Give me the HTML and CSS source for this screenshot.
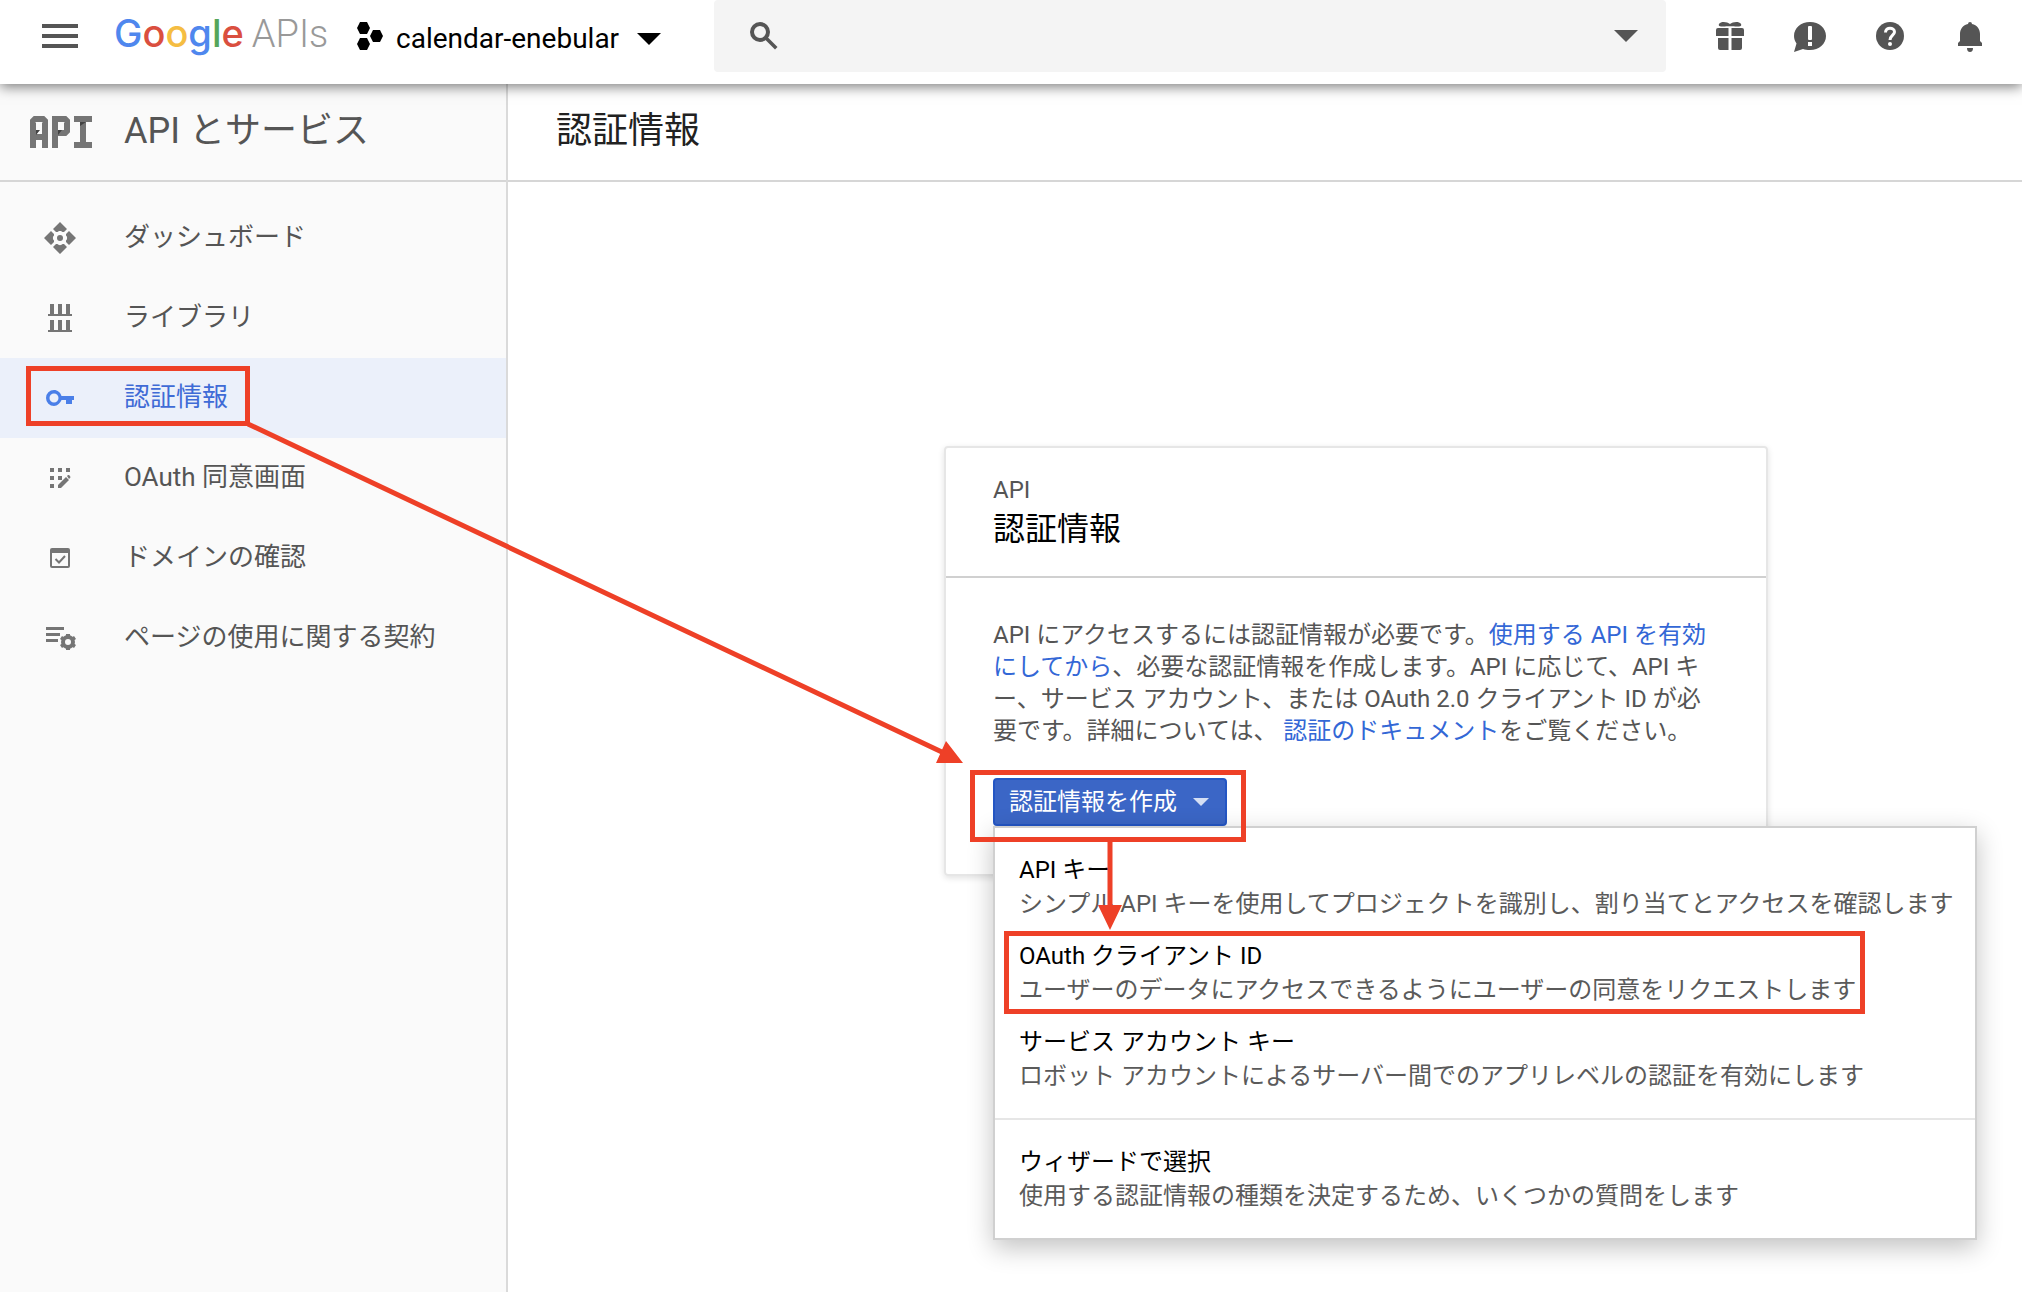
FILE: index.html
```html
<!DOCTYPE html>
<html lang="ja">
<head>
<meta charset="utf-8">
<meta name="viewport" content="width=device-width, initial-scale=1">
<title>認証情報 - API とサービス</title>
<link rel="stylesheet" href="styles.css">
</head>
<body>
<header class="topbar">
  <div class="topbar-start">
    <button class="icon-button" type="button" aria-label="メニュー">
      <svg width="36" height="36" viewBox="0 0 36 36"><path d="M0 6h36v4H0zM0 16h36v4H0zM0 26h36v4H0z"/></svg>
    </button>
    <a class="logo" href="#"><span class="logo-google"><span class="g-blue">G</span><span class="g-red">o</span><span class="g-yellow">o</span><span class="g-blue">g</span><span class="g-green">l</span><span class="g-red">e</span></span><span class="logo-apis">APIs</span></a>
    <button class="project" type="button">
      <svg width="26" height="28" viewBox="0 0 26 28"><path d="M3 0h7l3 6-3 6H3L0 6zM16 8h7l3 6-3 6h-7l-3-6zM3 16h7l3 6-3 6H3l-3-6z"/></svg>
      <span class="project-name">calendar-enebular</span>
      <svg class="project-arrow" width="24" height="12" viewBox="0 0 24 12"><path d="M0 0h24L12 12z"/></svg>
    </button>
  </div>
  <form class="search">
    <svg width="28" height="28" viewBox="0 0 28 28"><circle class="line" cx="10" cy="10" r="8" stroke-width="4"/><path d="M15 17.500l2.500-2.500L27.500 25 25 27.500z"/></svg>
    <input class="search-input" type="search" aria-label="検索">
    <button class="icon-button" type="button" aria-label="検索オプション">
      <svg width="24" height="12" viewBox="0 0 24 12"><path d="M0 0h24L12 12z"/></svg>
    </button>
  </form>
  <div class="topbar-end">
    <button class="icon-button" type="button" aria-label="無料トライアル">
      <svg width="36" height="36" viewBox="0 0 36 36"><path d="M6 10h10.500v8H4v-6q0-2 2-2zM19.500 10H30q2 0 2 2v6H19.500zM6 20h10.500v12H8q-2 0-2-2zM19.500 20H30v10q0 2-2 2h-8.500zM18 6c2-1.500 6-2.500 9-1.500 3 1 3 4 0 4-3 .300-5-.500-6.500-.300-1.500.200-3.500.200-5 0C14 8 12 8.800 9 8.500c-3 0-3-3 0-4 3-1 7 0 9 1.500z"/></svg>
    </button>
    <button class="icon-button" type="button" aria-label="フィードバック">
      <svg width="36" height="36" viewBox="0 0 36 36"><path fill-rule="evenodd" d="M18 4c9 0 16 6 16 14s-7 14-16 14c-3 0-5-.300-7-1L2 34l2.500-8.500C3 23 2 21 2 18 2 10 9 4 18 4zM16 9v12q0 1 1 1h2q1 0 1-1V9q0-1-1-1h-2q-1 0-1 1zM16 24v4h4v-4z"/></svg>
    </button>
    <button class="icon-button" type="button" aria-label="ヘルプ">
      <svg width="36" height="36" viewBox="0 0 36 36"><circle cx="18" cy="18" r="14"/><path d="M13.500 14.500c0-6 9-5.500 9-.500 0 3-4.500 3.500-4.500 8" fill="none" stroke="#fff" stroke-width="3"/><circle cx="18" cy="26" r="2" fill="#fff"/></svg>
    </button>
    <button class="icon-button" type="button" aria-label="通知">
      <svg width="36" height="36" viewBox="0 0 36 36"><path d="M18 4q2 0 2 2c5 1 8 5 8 10v7l2 2v3H6v-3l2-2v-7c0-5 3-9 8-10q0-2 2-2zM15 30h6q0 4-3 4t-3-4z"/></svg>
    </button>
  </div>
</header>

<div class="layout">
  <aside class="sidebar">
    <div class="sidebar-title">
      <svg class="product-icon" width="62" height="32" viewBox="0 0 62 32"><path class="line" stroke-width="6" d="M3 32V5l2-2h8l2 2v27M3 21h12M25 32V3h10l2 2v10l-2 2H25M44 3h18M53 3v26M44 29h18"/><path class="fold" d="M6 14h4l-4 5zM28 14h4l-4 5zM50 6h6l-6 4z"/></svg>
      <h2 class="heading">API とサービス</h2>
    </div>
    <nav class="nav">
      <a class="nav-item" href="#">
        <svg width="36" height="36" viewBox="0 0 36 36"><path d="M18 2l7 7-3 3h-1.500c-1-1.500-4-1.500-5 0H14l-3-3zM18 34l7-7-3-3h-1.500c-1 1.500-4 1.500-5 0H14l-3 3zM2 18l7-7 3 3v1.500c-1.500 1-1.500 4 0 5V22l-3 3zM34 18l-7-7-3 3v1.500c1.500 1 1.500 4 0 5V22l3 3z"/><circle cx="18" cy="18" r="3"/></svg>
        ダッシュボード
      </a>
      <a class="nav-item" href="#">
        <svg width="36" height="36" viewBox="0 0 36 36"><path d="M8 4h4v10h4V4h4v10h4V4h4v10h2v2H6v-2h2zM8 20h4v10h4V20h4v10h4V20h4v10h2v2H6v-2h2z"/></svg>
        ライブラリ
      </a>
      <a class="nav-item nav-item-active" href="#" aria-current="page">
        <svg width="36" height="36" viewBox="0 0 36 36"><path fill-rule="evenodd" d="M12 10c3.500 0 6.500 2.500 7.500 6H32v4h-2v4h-6v-4h-4.500c-1 2.500-4 6-7.500 6a8 8 0 0 1 0-16zM12 13.500a4.500 4.500 0 1 0 0 9 4.500 4.500 0 0 0 0-9z"/></svg>
        認証情報
      </a>
      <a class="nav-item" href="#">
        <svg width="36" height="36" viewBox="0 0 36 36"><path d="M8 8h4v4H8zM16 8h4v4h-4zM24 8h4v4h-4zM8 16h4v4H8zM16 16h4v4h-4zM8 24h4v4H8zM16 25l8-8 3 3-8 8h-3zM25 16l1-1q1-.500 2 1t0 2l-1 1z"/></svg>
        OAuth 同意画面
      </a>
      <a class="nav-item" href="#">
        <svg width="36" height="36" viewBox="0 0 36 36"><path fill-rule="evenodd" d="M10 8h16q2 0 2 2v16q0 2-2 2H10q-2 0-2-2V10q0-2 2-2zM10 13v13h16V13z"/><path class="line" d="M13.500 19l3.500 3.500 6-6.500" stroke-width="2"/></svg>
        ドメインの確認
      </a>
      <a class="nav-item" href="#">
        <svg width="36" height="36" viewBox="0 0 36 36"><path d="M4 7h18v3H4zM4 13h14v3H4zM4 19h12v3H4z"/><circle class="line" cx="26" cy="22" r="5" stroke-width="4"/><path d="M24 14h4v3h-4zM24 27h4v3h-4zM18 19l2-3 3 2-2 3zM34 19l-2-3-3 2 2 3zM18 25l2 3 3-2-2-3zM34 25l-2 3-3-2 2-3z"/></svg>
        ページの使用に関する契約
      </a>
    </nav>
  </aside>

  <main class="main">
    <div class="page-title"><h1 class="heading">認証情報</h1></div>
    <div class="content">
      <section class="card">
        <div class="card-head">
          <p class="card-kicker">API</p>
          <h2 class="card-title">認証情報</h2>
        </div>
        <div class="card-body">
          <p class="card-text">API にアクセスするには認証情報が必要です。<a href="#">使用する API を有効<br>にしてから</a>、必要な認証情報を作成します。API に応じて、API キ<br>ー、サービス アカウント、または OAuth 2.0 クライアント ID が必<br>要です。詳細については、 <a href="#">認証のドキュメント</a>をご覧ください。</p>
          <div class="dropdown">
            <button class="create-button" type="button" aria-haspopup="true" aria-expanded="true">
              認証情報を作成
              <svg width="16" height="8" viewBox="0 0 16 8"><path d="M0 0h16L8 8z"/></svg>
            </button>
            <div class="menu">
              <div class="menu-group">
                <a class="menu-item" href="#"><span class="menu-title">API キー</span><span>シンプル API キーを使用してプロジェクトを識別し、割り当てとアクセスを確認します</span></a>
                <a class="menu-item" href="#"><span class="menu-title">OAuth クライアント ID</span><span>ユーザーのデータにアクセスできるようにユーザーの同意をリクエストします</span></a>
                <a class="menu-item" href="#"><span class="menu-title">サービス アカウント キー</span><span>ロボット アカウントによるサーバー間でのアプリレベルの認証を有効にします</span></a>
              </div>
              <div class="menu-group">
                <a class="menu-item" href="#"><span class="menu-title">ウィザードで選択</span><span>使用する認証情報の種類を決定するため、いくつかの質問をします</span></a>
              </div>
            </div>
          </div>
        </div>
      </section>
    </div>
  </main>
</div>

<svg class="annotations" width="1900" height="1040" viewBox="0 0 1900 1040" aria-hidden="true">
  <g fill="none" stroke="#ee4027" stroke-width="5">
    <rect x="28.500" y="368.500" width="219" height="55"/>
    <rect x="972.500" y="772.500" width="271" height="67"/>
    <rect x="1006.500" y="933.500" width="856" height="78"/>
    <path d="M248 424L944 753M1110 842v66"/>
  </g>
  <path fill="#ee4027" d="M963 763l-17-22-10 22zM1110 930l-12-25h24z"/>
</svg>
</body>
</html>
```

FILE: styles.css
```css
* {
  box-sizing: border-box;
}

body {
  margin: 0;
  min-height: 100vh;
  display: flex;
  flex-direction: column;
  position: relative;
  background: #fff;
  color: #555;
  font-family: Roboto, "Noto Sans CJK JP", sans-serif;
  font-size: 24px;
  line-height: 32px;
}

h1, h2, p {
  margin: 0;
  font-weight: 400;
}

a {
  color: #3367d6;
  text-decoration: none;
}

button {
  border: 0;
  padding: 0;
  background: none;
  font: inherit;
  color: inherit;
  cursor: pointer;
}

svg {
  display: block;
  flex: none;
  fill: currentColor;
}

.line {
  fill: none;
  stroke: currentColor;
}

/* Top bar */
.topbar {
  position: relative;
  z-index: 1;
  display: flex;
  padding-bottom: 12px;
  background: #fff;
  box-shadow: 0 3px 12px rgba(0, 0, 0, 0.5);
}

.topbar-start {
  display: flex;
  align-items: center;
  width: 714px;
  height: 72px;
  padding-left: 42px;
}

.icon-button {
  display: flex;
}

.logo {
  display: flex;
  align-items: baseline;
  gap: 8px;
  width: 242px;
  padding: 0 0 6px 36px;
  line-height: 64px;
}

.logo-google {
  font-family: Inter, sans-serif;
  font-size: 38px;
  font-weight: 500;
}

.logo-apis {
  font-size: 38px;
  font-weight: 300;
  color: #999;
}

.g-blue { color: #4f87ee; }
.g-red { color: #da4f3f; }
.g-yellow { color: #f5bd42; }
.g-green { color: #55a55b; }

.project {
  display: flex;
  align-items: center;
  margin-left: 37px;
  color: #000;
}

.project-name {
  margin: 6px 18px 0 13px;
  font-size: 28px;
}

.project-arrow {
  margin-top: 6px;
}

.search {
  flex: 1;
  display: flex;
  align-items: center;
  height: 72px;
  padding: 0 28px 0 36px;
  background: #f4f4f4;
  border-radius: 4px;
}

.search-input {
  flex: 1;
  min-width: 0;
  height: 48px;
  margin: 0 16px;
  border: 0;
  outline: 0;
  background: none;
  font: inherit;
}

.topbar-end {
  display: flex;
  align-items: center;
  gap: 44px;
  height: 72px;
  padding: 0 34px 0 46px;
}

/* Page frame */
.layout {
  flex: 1;
  display: flex;
}

.sidebar {
  width: 508px;
  background: #fafafa;
  border-right: 2px solid #dadada;
}

.sidebar-title,
.page-title {
  display: flex;
  align-items: center;
  height: 98px;
  border-bottom: 2px solid #d6d6d6;
}

.sidebar-title {
  gap: 32px;
  padding-left: 30px;
}

.product-icon {
  color: #757575;
}

.fold {
  fill: #424242;
}

.page-title {
  padding-left: 48px;
  color: #212121;
}

.heading {
  font-size: 36px;
  line-height: 48px;
  padding-bottom: 2px;
}

.nav {
  padding-top: 16px;
}

.nav-item {
  display: flex;
  align-items: center;
  gap: 46px;
  height: 80px;
  padding: 0 0 2px 42px;
  font-size: 26px;
  color: #555;
}

.nav-item svg {
  margin-top: 2px;
  color: #757575;
}

.nav-item-active {
  background: #ebf0fa;
  color: #3f6bd6;
}

.nav-item-active svg {
  color: #4a7fe8;
}

.main {
  flex: 1;
  min-width: 0;
}

.content {
  display: flex;
  justify-content: center;
  padding: 264px 0 64px 182px;
}

/* Credentials card */
.card {
  width: 824px;
  border: 2px solid #e6e6e6;
  border-radius: 4px;
  box-shadow: 0 2px 6px rgba(0, 0, 0, 0.12);
}

.card-head {
  padding: 26px 47px 24px;
  border-bottom: 2px solid #d0d0d0;
}

.card-title {
  font-size: 32px;
  line-height: 46px;
  color: #000;
}

.card-body {
  padding: 41px 47px 48px;
}

.card-text {
  white-space: nowrap;
}

.dropdown {
  position: relative;
  display: flex;
  margin-top: 31px;
}

.create-button {
  display: flex;
  align-items: center;
  gap: 16px;
  height: 48px;
  padding: 0 16px 0 14px;
  border: 2px solid #2456c4;
  border-radius: 4px;
  background: #3b66c6;
  color: #fff;
}

.create-button svg {
  color: #d5dff4;
}

.menu {
  position: absolute;
  top: 100%;
  left: 0;
  width: 984px;
  border: 2px solid #d0d0d0;
  background: #fff;
  box-shadow: 0 8px 24px rgba(0, 0, 0, 0.24);
  white-space: nowrap;
}

.menu-group {
  padding: 16px 0;
}

.menu-group + .menu-group {
  border-top: 2px solid #e6e6e6;
}

.menu-item {
  display: flex;
  flex-direction: column;
  padding: 9px 24px;
  line-height: 34px;
  color: #5a5a5a;
}

.menu-title {
  color: #000;
}

/* Red callouts drawn over the page */
.annotations {
  position: absolute;
  top: 0;
  left: 0;
  z-index: 2;
  pointer-events: none;
}
```
